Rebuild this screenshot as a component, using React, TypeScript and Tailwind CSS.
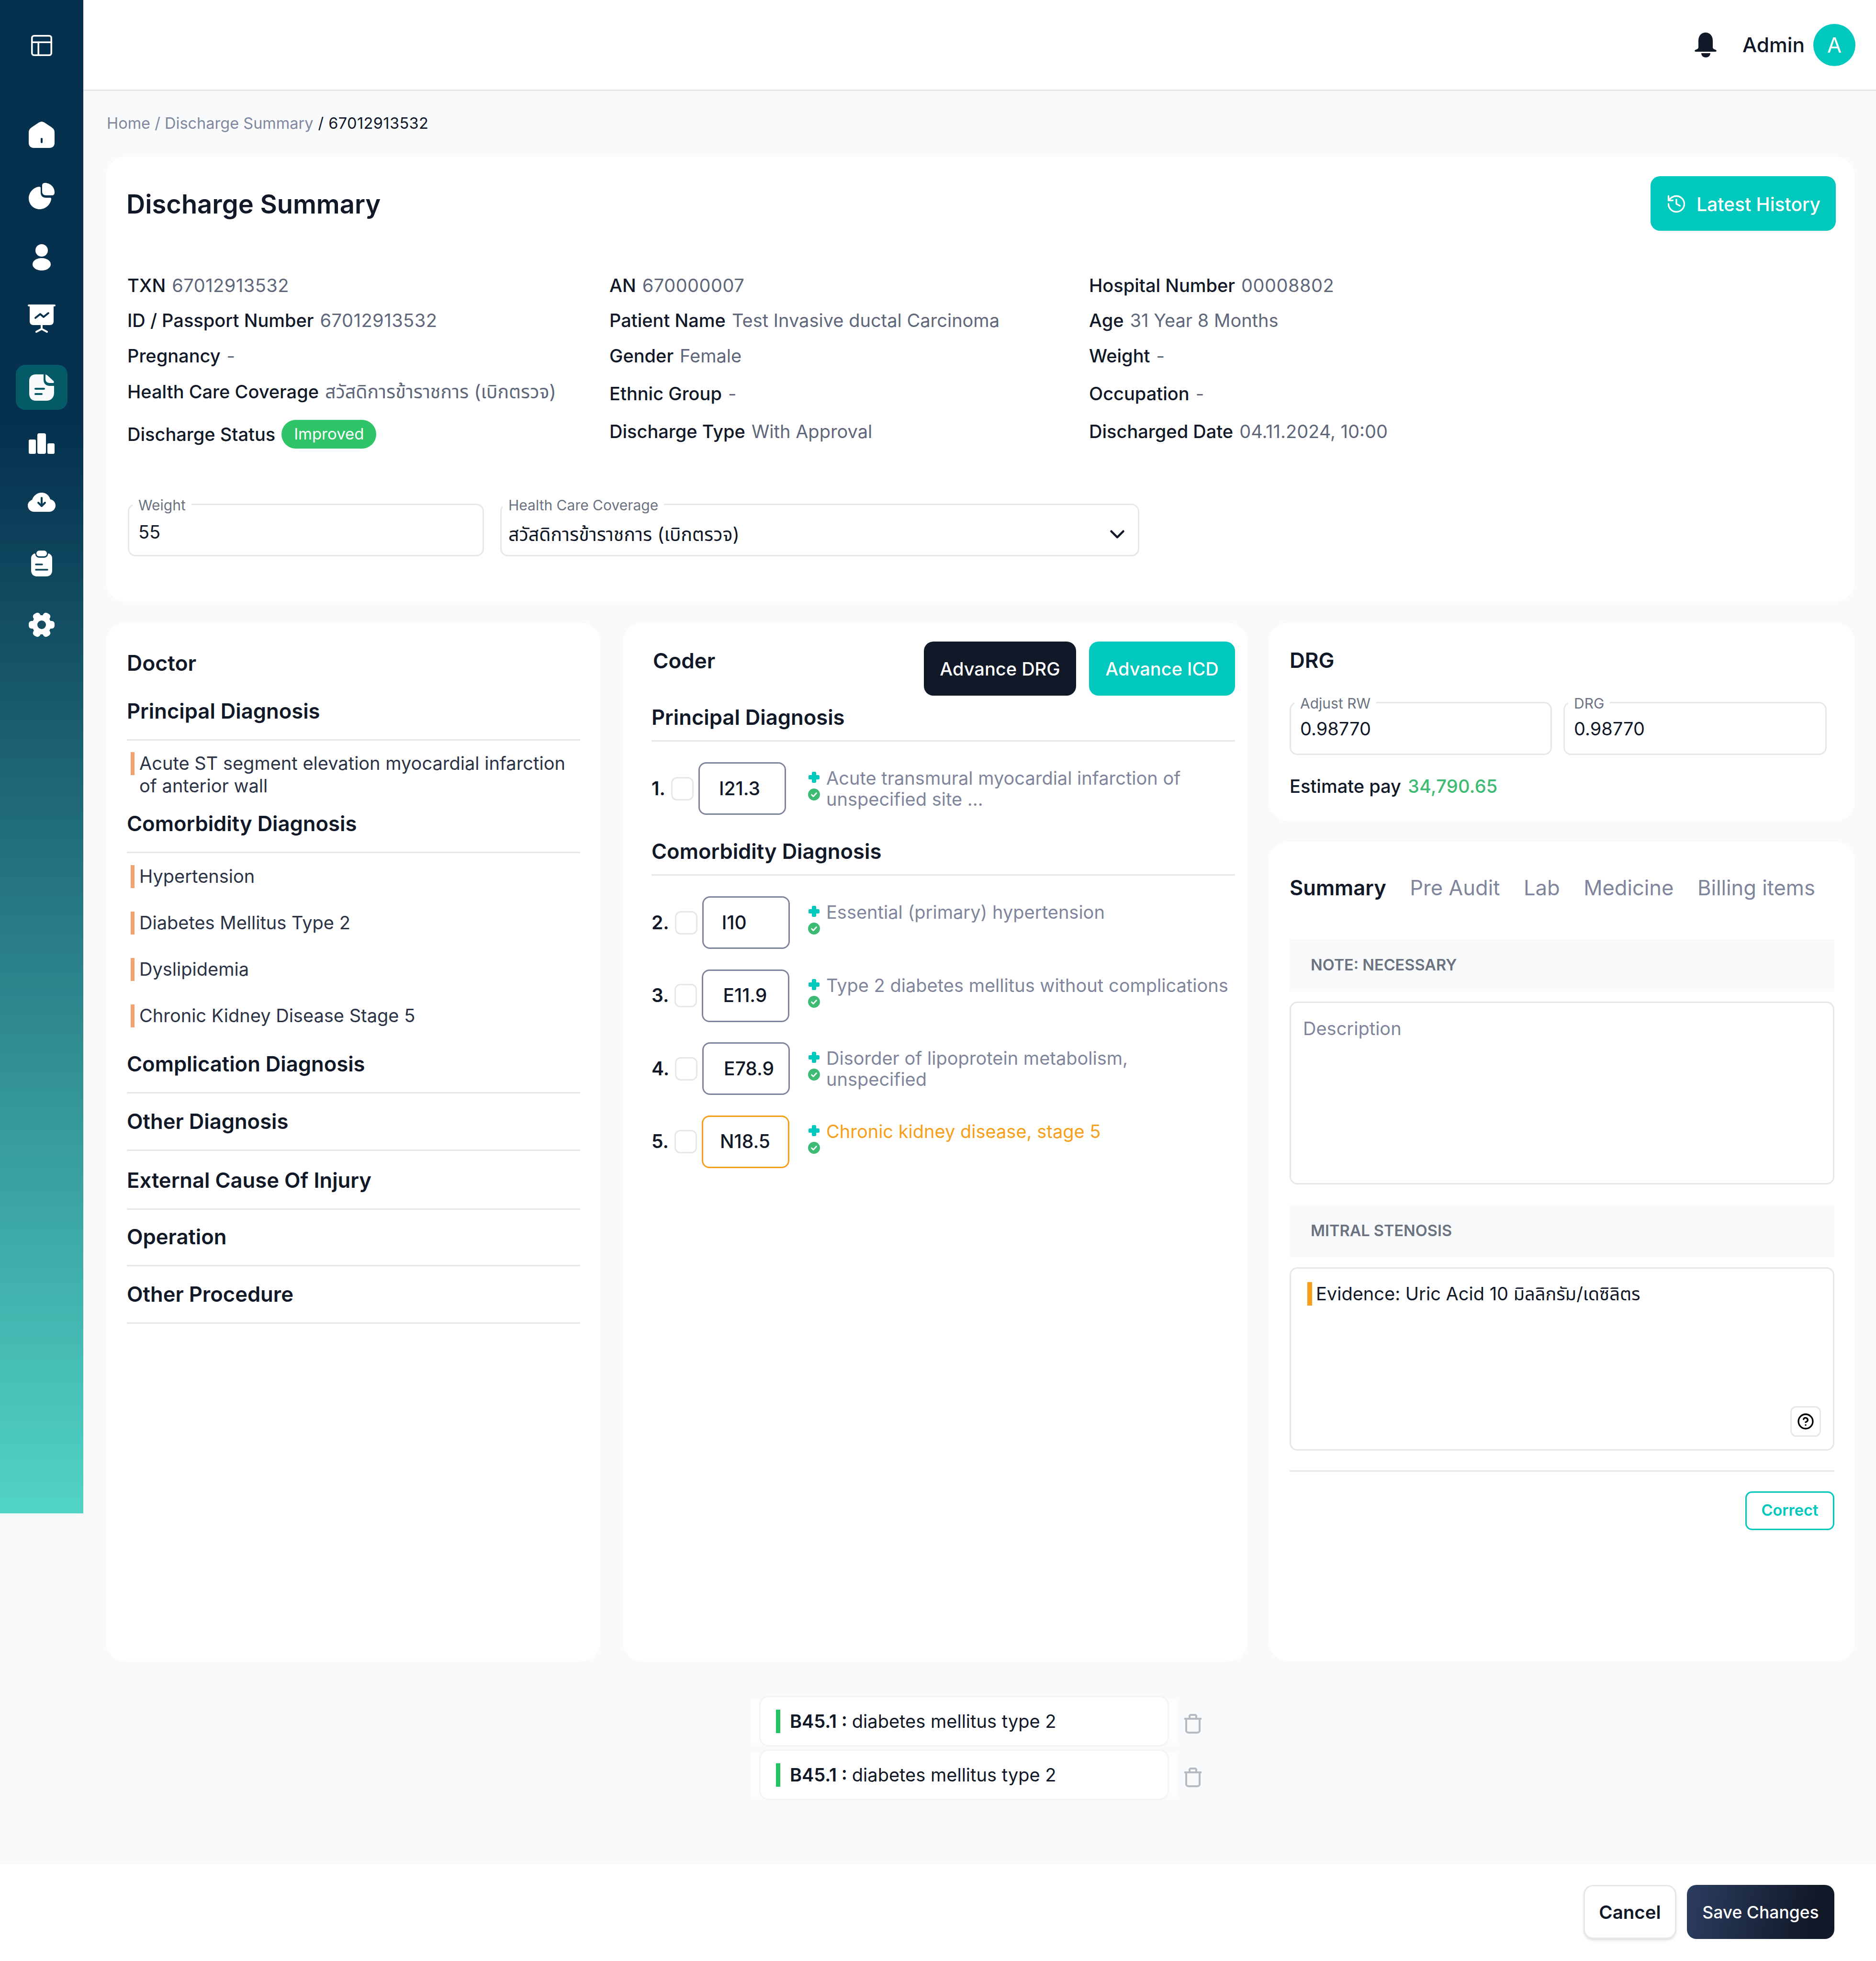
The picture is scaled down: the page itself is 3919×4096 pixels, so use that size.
import { ChevronDown, CircleHelp, History, PanelsTopLeft } from 'lucide-react';
import type { ReactNode } from 'react';

const HomeIcon = () => (
  <svg width="54" height="55" viewBox="0 0 54 55">
    <path fill="#fff" d="M27 0C29 0 31 1 33 2L48 12C52 15 54 18 54 23V44C54 51 50 55 43 55H11C4 55 0 51 0 44V23C0 18 2 15 6 12L21 2C23 1 25 0 27 0Z" />
    <path stroke="#05304e" strokeWidth="4" strokeLinecap="round" d="M27 36V43" />
  </svg>
);

const PieIcon = () => (
  <svg width="54" height="55" viewBox="0 0 54 55" fill="#fff">
    <path d="M34 0C45 0 54 9 54 20C54 24 52 26 48 26H36C31 26 28 23 28 18V6C28 2 30 0 34 0Z" />
    <path d="M22 8C24 8 25 9 25 11V20C25 27 29 31 36 31H45C47 31 47 33 47 34C45 46 35 55 23 55C10 55 0 45 0 32C0 20 10 9 22 8Z" />
  </svg>
);

const UserIcon = () => (
  <svg width="38" height="55" viewBox="0 0 38 55" fill="#fff">
    <circle cx="19" cy="13" r="13" />
    <ellipse cx="19" cy="42" rx="19" ry="13" />
  </svg>
);

const BoardIcon = () => (
  <svg width="58" height="59" viewBox="0 0 58 59" fill="none">
    <path stroke="#fff" strokeWidth="4" strokeLinecap="round" d="M2 2H56M29 43V51L18 57M29 51L40 57" />
    <path fill="#fff" d="M4 2H54V35C54 40 51 43 46 43H12C7 43 4 40 4 35Z" />
    <path stroke="#05304e" strokeWidth="4" strokeLinecap="round" strokeLinejoin="round" d="M16 28L26 20L33 26L43 18" />
  </svg>
);

const DocIcon = () => (
  <svg width="52" height="55" viewBox="0 0 52 55">
    <path fill="#f9fafb" d="M14 0H30V11C30 19 35 24 43 24H52V38C52 48 46 55 36 55H14C5 55 0 49 0 40V14C0 5 5 0 14 0Z" />
    <path fill="#f9fafb" d="M34 0C35 0 36 1 38 2L51 14C52 16 52 18 50 18H43C38 18 34 15 34 10Z" />
    <path stroke="#055a68" strokeWidth="4" strokeLinecap="round" d="M13 30H31M13 41H26" />
  </svg>
);

const BarsIcon = () => (
  <svg width="54" height="43" viewBox="0 0 54 43" fill="#fff">
    <rect x="0" y="13" width="15" height="30" rx="3" />
    <rect x="18" y="0" width="18" height="43" rx="4" />
    <rect x="39" y="21" width="15" height="22" rx="3" />
  </svg>
);

const CloudIcon = () => (
  <svg width="58" height="40" viewBox="0 0 58 40">
    <path fill="#fff" d="M29 0C38 0 45 6 47 14C53 15 58 20 58 27C58 34 52 40 45 40H13C6 40 0 34 0 27C0 21 4 17 9 15C12 6 20 0 29 0Z" />
    <path fill="none" stroke="#0a3d55" strokeWidth="4" strokeLinecap="round" strokeLinejoin="round" d="M29 11V27M22 21L29 28L36 21" />
  </svg>
);

const ClipboardIcon = () => (
  <svg width="44" height="54" viewBox="0 0 44 54">
    <rect x="11" y="0" width="22" height="12" rx="6" fill="#fff" />
    <path fill="#fff" d="M7 6C8 6 9 7 9 8C9 12 13 15 17 15H27C31 15 35 12 35 8C35 7 36 6 37 6C41 8 44 11 44 16V42C44 49 39 54 32 54H12C5 54 0 49 0 42V16C0 11 3 8 7 6Z" />
    <path stroke="#104458" strokeWidth="3.5" strokeLinecap="round" d="M10 29H23M10 40H34" />
  </svg>
);

const GearIcon = () => (
  <svg width="54" height="52" viewBox="0 0 54 52">
    <g fill="#fff" transform="translate(27 26)">
      <circle r="20" />
      <rect x="-27" y="-8" width="54" height="16" rx="6" />
      <rect x="-27" y="-8" width="54" height="16" rx="6" transform="rotate(60)" />
      <rect x="-27" y="-8" width="54" height="16" rx="6" transform="rotate(120)" />
      <circle r="9" fill="#154e60" />
    </g>
  </svg>
);

const BellIcon = () => (
  <svg width="46" height="52" viewBox="0 0 46 52" fill="#111827">
    <path d="M23 0C33 0 38 8 38 17V31C38 33 40 35 44 36C47 38 46 40 43 40H3C0 40 -1 38 2 36C6 35 8 33 8 31V17C8 8 13 0 23 0Z" />
    <path d="M14 43H33C33 49 28 52 23.5 52C19 52 14 49 14 43Z" />
  </svg>
);

const TrashIcon = () => (
  <svg width="36" height="41" viewBox="0 0 36 41" fill="none" stroke="#b6bac3" strokeWidth="4" strokeLinecap="round">
    <path d="M1 10H35M11 9V5C11 3 12 2 14 2H22C24 2 25 3 25 5V9" />
    <path d="M4 10V34C4 37 6 39 9 39H27C30 39 32 37 32 34V10" />
  </svg>
);

const PlusIcon = () => (
  <svg width="23" height="23" viewBox="0 0 23 23" fill="#00c8bc">
    <rect x="7" y="0" width="9" height="23" rx="2.5" />
    <rect x="0" y="7" width="23" height="9" rx="2.5" />
  </svg>
);

const CheckBadge = () => (
  <svg width="25" height="25" viewBox="0 0 25 25">
    <circle cx="12.5" cy="12.5" r="12.5" fill="#3dbb74" />
    <path fill="none" stroke="#fff" strokeWidth="2.6" strokeLinecap="round" strokeLinejoin="round" d="M7.5 13L11 16.5L17.5 9.5" />
  </svg>
);

const navItems = [
  { icon: <HomeIcon />, box: 'mt-[132px] h-[55px]' },
  { icon: <PieIcon />, box: 'mt-[73px] h-[55px]' },
  { icon: <UserIcon />, box: 'mt-[73px] h-[55px]' },
  { icon: <BoardIcon />, box: 'mt-[71px] h-[59px]' },
  { icon: <DocIcon />, box: 'mt-[67px] h-[94px] w-[108px] rounded-[20px] bg-[#055a68]' },
  { icon: <BarsIcon />, box: 'mt-[49px] h-[43px]' },
  { icon: <CloudIcon />, box: 'mt-[81px] h-[40px]' },
  { icon: <ClipboardIcon />, box: 'mt-[81px] h-[54px]' },
  { icon: <GearIcon />, box: 'mt-[75px] h-[52px]' },
];

function Sidebar() {
  return (
    <aside className="flex h-[3161px] w-[174px] shrink-0 flex-col items-center bg-[linear-gradient(180deg,#05304e_28%,#51d4c6_100%)]">
      <div className="mt-[68px] flex h-[54px] items-center justify-center text-white">
        <PanelsTopLeft size={54} strokeWidth={1.6} />
      </div>
      {navItems.map((item, i) => (
        <div key={i} className={`flex items-center justify-center ${item.box}`}>
          {item.icon}
        </div>
      ))}
    </aside>
  );
}

function Field({ label, className, labelLeft = 'left-[7px]', children }: { label: string; className: string; labelLeft?: string; children: ReactNode }) {
  return (
    <div className={`relative rounded-[16px] border-[3px] border-[#e5e7eb] bg-white ${className}`}>
      <span className={`absolute top-[-18px] bg-white px-3 text-[30px] leading-[36px] text-[#6b7280] ${labelLeft}`}>{label}</span>
      {children}
    </div>
  );
}

const infoCols = [
  {
    width: 'w-[1007px]',
    rows: [
      { h: 'h-[72px]', k: 'TXN', v: '67012913532' },
      { h: 'h-[74px]', k: 'ID / Passport Number', v: '67012913532' },
      { h: 'h-[74px]', k: 'Pregnancy', v: '-' },
      { h: 'h-[76px]', k: 'Health Care Coverage', thai: 'สวัสดิการข้าราชการ (เบิกตรวจ)' },
      { h: 'h-[102px]', k: 'Discharge Status', badge: 'Improved' },
    ],
  },
  {
    width: 'w-[1002px]',
    rows: [
      { h: 'h-[72px]', k: 'AN', v: '670000007' },
      { h: 'h-[74px]', k: 'Patient Name', v: 'Test Invasive ductal Carcinoma' },
      { h: 'h-[74px]', k: 'Gender', v: 'Female' },
      { h: 'h-[84px]', k: 'Ethnic Group', v: '-' },
      { h: 'h-[74px]', k: 'Discharge Type', v: 'With Approval' },
    ],
  },
  {
    width: 'w-[1200px]',
    rows: [
      { h: 'h-[72px]', k: 'Hospital Number', v: '00008802' },
      { h: 'h-[74px]', k: 'Age', v: '31 Year 8 Months' },
      { h: 'h-[74px]', k: 'Weight', v: '-' },
      { h: 'h-[84px]', k: 'Occupation', v: '-' },
      { h: 'h-[74px]', k: 'Discharged Date', v: '04.11.2024, 10:00' },
    ],
  },
];

function SummaryCard() {
  return (
    <section className="h-[930px] rounded-[42px] bg-white pl-[43px] pr-[40px] pt-[41px]">
      <div className="flex h-[114px] items-center justify-between">
        <h1 className="pt-[4px] text-[54.3px] font-semibold text-[#111827]">Discharge Summary</h1>
        <button className="flex h-[114px] w-[387px] items-center justify-center gap-[20px] rounded-[20px] bg-[#00c8bc] pt-[5px] text-[39px] font-medium text-white">
          <History size={44} strokeWidth={1.8} className="mb-[3px]" />
          Latest History
        </button>
      </div>
      <div className="ml-[2px] mt-[78px] flex h-[398px] text-[38px] text-[#111827]">
        {infoCols.map((col, i) => (
          <div key={i} className={`${col.width} shrink-0`}>
            {col.rows.map((row) => (
              <div key={row.k} className={`flex items-center gap-[13px] ${row.h}`}>
                <span className="font-medium">{row.k}</span>
                {row.v && <span className={`text-[#5f677a] ${/^\d+$/.test(row.v) ? 'tracking-[0.5px]' : ''}`}>{row.v}</span>}
                {row.thai && <span className="text-[39.3px] text-[#5f677a]">{row.thai}</span>}
                {row.badge && (
                  <span className="flex h-[60px] w-[198px] items-center justify-center rounded-full bg-[#2fc468] text-[33px] text-white">
                    {row.badge}
                  </span>
                )}
              </div>
            ))}
          </div>
        ))}
      </div>
      <div className="ml-[3px] mt-[94px] flex gap-[34px] text-[38px] text-[#111827]">
        <Field label="Weight" className="h-[110px] w-[744px]">
          <div className="pl-[19px] pt-[33px] leading-[46px]">55</div>
        </Field>
        <Field label="Health Care Coverage" labelLeft="left-[2px]" className="h-[110px] w-[1335px]">
          <div className="flex items-center justify-between pl-[14px] pr-[18px] pt-[36px] leading-[46px]">
            <span className="text-[39.3px]">สวัสดิการข้าราชการ (เบิกตรวจ)</span>
            <ChevronDown size={50} strokeWidth={2.2} />
          </div>
        </Field>
      </div>
    </section>
  );
}

function SectionHead({ title, height, pad = 'pb-[34px]' }: { title: string; height: string; pad?: string }) {
  return (
    <h3 className={`flex items-end border-b-[3px] border-[#e5e7eb] text-[43.6px] font-semibold leading-[48px] text-[#111827] ${height} ${pad}`}>
      {title}
    </h3>
  );
}

function DoctorItem({ text }: { text: string }) {
  return (
    <div className="flex h-[97px] items-center pl-[8px] text-[38px] text-[#2b3345]">
      <span className="mr-[10px] h-[48px] w-[8px] bg-[#f2a371]" />
      {text}
    </div>
  );
}

function DoctorCard() {
  return (
    <section className="mr-[47px] h-[2170px] w-[1033px] shrink-0 rounded-[42px] bg-white pl-[44px] pr-[42px] pt-[48px]">
      <h2 className="flex h-[72px] items-center text-[44.5px] font-semibold text-[#111827]">Doctor</h2>
      <SectionHead title="Principal Diagnosis" height="h-[126px]" />
      <div className="mt-[24px] flex pl-[8px] text-[38px] leading-[47px] text-[#2b3345]">
        <span className="mr-[10px] h-[48px] w-[8px] shrink-0 bg-[#f2a371]" />
        <span>
          Acute ST segment elevation myocardial infarction
          <br />
          of anterior wall
        </span>
      </div>
      <SectionHead title="Comorbidity Diagnosis" height="h-[117px]" />
      <DoctorItem text="Hypertension" />
      <DoctorItem text="Diabetes Mellitus Type 2" />
      <DoctorItem text="Dyslipidemia" />
      <DoctorItem text="Chronic Kidney Disease Stage 5" />
      <SectionHead title="Complication Diagnosis" height="h-[114px]" />
      <SectionHead title="Other Diagnosis" height="h-[120px]" />
      <SectionHead title="External Cause Of Injury" height="h-[123px]" />
      <SectionHead title="Operation" height="h-[118px]" />
      <SectionHead title="Other Procedure" height="h-[120px]" />
    </section>
  );
}

function CodeRow({ no, code, pad, lines, warn }: { no: string; code: string; pad: string; lines: string[]; warn?: boolean }) {
  return (
    <div className="flex h-[110px]">
      <div className="flex w-[327px] shrink-0 items-center">
        <span className="mr-[12px] text-[39px] font-semibold text-[#111827]">{no}</span>
        <span className="mr-[10px] h-[49px] w-[47px] rounded-[12px] border-[3px] border-[#e5e7eb] bg-white" />
        <span
          className={`flex h-[110px] w-[183px] items-center rounded-[16px] border-[3px] bg-white text-[39px] font-medium text-[#111827] ${pad} ${warn ? 'border-[#f79f1a]' : 'border-[#7f869b]'}`}
        >
          {code}
        </span>
      </div>
      <div className="flex w-[25px] shrink-0 flex-col items-center gap-[12px] pt-[20px]">
        <PlusIcon />
        <CheckBadge />
      </div>
      <p className={`ml-[13px] pt-[11px] text-[38px] leading-[44px] ${warn ? 'text-[#f79f1a]' : 'text-[#7f869b]'}`}>
        {lines.map((line) => (
          <span key={line} className="block whitespace-nowrap">
            {line}
          </span>
        ))}
      </p>
    </div>
  );
}

function CoderCard() {
  return (
    <section className="mr-[44px] h-[2170px] w-[1305px] shrink-0 rounded-[42px] bg-white pl-[60px] pr-[26px] pt-[39px]">
      <div className="flex h-[113px] items-start justify-between">
        <h2 className="pl-[3px] pt-[8px] text-[44px] font-semibold leading-[64px] text-[#111827]">Coder</h2>
        <div className="flex gap-[27px] text-[38px] font-medium text-white">
          <button className="h-[113px] w-[318px] rounded-[20px] bg-[#111827] pt-[2px]">Advance DRG</button>
          <button className="h-[113px] w-[305px] rounded-[20px] bg-[#00c8bc] pt-[2px]">Advance ICD</button>
        </div>
      </div>
      <SectionHead title="Principal Diagnosis" height="h-[96px]" pad="pb-[23px]" />
      <div className="mt-[43px]">
        <CodeRow no="1." code="I21.3" pad="pl-[40px]" lines={['Acute transmural myocardial infarction of', 'unspecified site ...']} />
      </div>
      <SectionHead title="Comorbidity Diagnosis" height="h-[127px]" pad="pb-[23px]" />
      <div className="mt-[43px] flex flex-col gap-[42.5px]">
        <CodeRow no="2." code="I10" pad="pl-[38px]" lines={['Essential (primary) hypertension']} />
        <CodeRow no="3." code="E11.9" pad="pl-[41px]" lines={['Type 2 diabetes mellitus without complications']} />
        <CodeRow no="4." code="E78.9" pad="pl-[42px]" lines={['Disorder of lipoprotein metabolism,', 'unspecified']} />
        <CodeRow no="5." code="N18.5" pad="pl-[35px]" lines={['Chronic kidney disease, stage 5']} warn />
      </div>
    </section>
  );
}

function DrgCard() {
  return (
    <section className="h-[414px] rounded-[42px] bg-white pl-[44px] pt-[47px]">
      <h2 className="flex h-[62px] items-center text-[44px] font-semibold text-[#111827]">DRG</h2>
      <div className="mt-[56px] flex gap-[24px] text-[38px] text-[#111827]">
        <Field label="Adjust RW" className="h-[111px] w-[548px]">
          <div className="pl-[19px] pt-[30px] leading-[46px]">0.98770</div>
        </Field>
        <Field label="DRG" className="h-[111px] w-[550px]">
          <div className="pl-[19px] pt-[30px] leading-[46px]">0.98770</div>
        </Field>
      </div>
      <div className="mt-[42px] flex gap-[14px] text-[38px] leading-[46px] text-[#111827]">
        <span className="font-medium">Estimate pay</span>
        <span className="font-medium tracking-[0.3px] text-[#3dbb74]">34,790.65</span>
      </div>
    </section>
  );
}

function AuditCard() {
  const tabs = ['Pre Audit', 'Lab', 'Medicine', 'Billing items'];
  return (
    <section className="h-[1712px] rounded-[42px] bg-white pl-[44px] pr-[43px] pt-[66px]">
      <div className="flex h-[60px] items-center gap-[49.5px] text-[43.5px] leading-[60px] text-[#7f869b]">
        <span className="font-semibold text-[#111827]">Summary</span>
        {tabs.map((t) => (
          <span key={t}>{t}</span>
        ))}
      </div>
      <div className="mt-[78px] flex h-[109px] items-center bg-[#f9fafb] pl-[44px] text-[32.5px] font-semibold text-[#6b7280]">NOTE: NECESSARY</div>
      <div className="mt-[21px] h-[382px] rounded-[16px] border-[3px] border-[#e5e7eb] px-[25px] pt-[30px] text-[38px] leading-[46px] text-[#7f869b]">
        Description
      </div>
      <div className="mt-[43px] flex h-[109px] items-center bg-[#f9fafb] pl-[44px] text-[32.5px] font-semibold text-[#6b7280]">MITRAL STENOSIS</div>
      <div className="relative mt-[21px] h-[383px] rounded-[16px] border-[3px] border-[#e5e7eb] pl-[34px] pt-[28px] text-[38px] leading-[49px] text-[#111827]">
        <div className="flex">
          <span className="mr-[8px] h-[49px] w-[10px] bg-[#f79f1a]" />
          <span>Evidence: Uric Acid 10 มิลลิกรัม/เดซิลิตร</span>
        </div>
        <span className="absolute bottom-[26px] right-[25px] flex h-[64px] w-[64px] items-center justify-center rounded-[12px] border-[3px] border-[#e5e7eb] text-black">
          <CircleHelp size={36} strokeWidth={2.2} />
        </span>
      </div>
      <div className="mt-[41px] border-t-[3px] border-[#e5e7eb]" />
      <div className="mt-[41px] flex justify-end">
        <button className="h-[81px] w-[186px] rounded-[14px] border-[3px] border-[#00c8bc] text-[32.5px] font-semibold text-[#00c8bc]">Correct</button>
      </div>
    </section>
  );
}

function AttachedRow() {
  return (
    <div className="flex items-center">
      <div className="flex h-[92px] w-[892px] items-center bg-[#fdfdfe] pl-[18px]">
        <div className="flex h-[106px] w-[856px] shrink-0 items-center rounded-[20px] border-[3px] border-[#f3f4f6] bg-white pl-[32px] text-[38px] text-[#111827]">
          <span className="mr-[20px] h-[49px] w-[9px] bg-[#22c365]" />
          <b className="mr-[10px] font-semibold">B45.1 :</b>
          diabetes mellitus type 2
        </div>
      </div>
      <div className="ml-[14px] mt-[10px]">
        <TrashIcon />
      </div>
    </div>
  );
}

export default function App() {
  return (
    <div className="flex h-[4096px] w-[3919px] flex-col bg-[#f9fafb] font-['Inter','Noto_Sans_Thai','Noto_Sans',sans-serif]">
      <div className="flex h-[3894px] shrink-0">
        <Sidebar />
        <div className="flex min-w-0 flex-1 flex-col">
          <header className="flex h-[190px] shrink-0 items-center justify-end border-b-[3px] border-[#e5e7eb] bg-white pr-[43px]">
            <BellIcon />
            <span className="ml-[54px] text-[42.5px] font-medium text-[#111827]">Admin</span>
            <span className="ml-[18px] flex h-[88px] w-[88px] items-center justify-center rounded-full bg-[#00c8bc] text-[44px] text-white">A</span>
          </header>
          <main className="flex-1 pl-[47px] pr-[44px]">
            <div className="flex h-[137px] items-center pl-[2px] text-[32.5px] text-[#8088a0]">
              Home / Discharge Summary <span className="ml-[10px] tracking-[0.4px] text-[#111827]">/ 67012913532</span>
            </div>
            <SummaryCard />
            <div className="mt-[44px] flex">
              <DoctorCard />
              <CoderCard />
              <div className="flex w-[1225px] shrink-0 flex-col gap-[43px]">
                <DrgCard />
                <AuditCard />
              </div>
            </div>
            <div className="ml-[1347px] mt-[78px] flex flex-col gap-[20px]">
              <AttachedRow />
              <AttachedRow />
            </div>
          </main>
        </div>
      </div>
      <footer className="flex h-[202px] shrink-0 items-start justify-end gap-[22px] bg-white pr-[87px] pt-[43px]">
        <button className="h-[113px] w-[194px] rounded-[20px] border-[3px] border-[#e5e7eb] bg-white pt-[2px] text-[38.5px] font-semibold text-[#111827] shadow-md">Cancel</button>
        <button className="h-[113px] w-[308px] rounded-[20px] bg-[linear-gradient(100deg,#2b3d60,#111827_85%)] pt-[2px] text-[35.5px] font-medium text-white">Save Changes</button>
      </footer>
    </div>
  );
}
